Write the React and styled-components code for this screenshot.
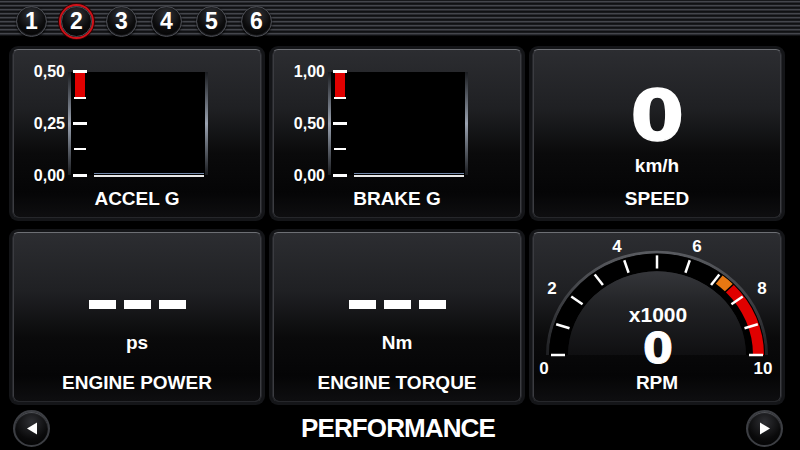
import React from "react";
import styled, { createGlobalStyle } from "styled-components";

const GlobalStyle = createGlobalStyle`
  html, body {
    margin: 0;
    padding: 0;
    background: #000;
  }
  body {
    font-family: "Liberation Sans", Arial, sans-serif;
    color: #fff;
  }
`;

const Screen = styled.div`
  width: 800px;
  height: 450px;
  overflow: hidden;
  display: flex;
  flex-direction: column;
  background: #000;
`;

const TopBar = styled.div`
  height: 40px;
  box-sizing: border-box;
  padding: 2px 0 0 16px;
  display: flex;
  align-items: center;
  gap: 14px;
  background:
    repeating-linear-gradient(
        to bottom,
        #18191c 0px,
        #18191c 1px,
        #44464c 1px,
        #44464c 2px,
        #2a2b30 2px,
        #2a2b30 3px,
        #101113 3px,
        #101113 4px
      )
      top / 100% 36px no-repeat,
    linear-gradient(to bottom, #0c0c0e, #000);
`;

const Tab = styled.div`
  width: 31px;
  height: 31px;
  box-sizing: border-box;
  border-radius: 50%;
  border: 1px solid #4a4c52;
  background: radial-gradient(circle at 50% 28%, #34363b 0%, #0c0c0d 55%, #000 100%);
  box-shadow: ${(p) =>
    p.$active ? "0 0 0 2px #d0121a, 0 0 0 3px #300" : "0 1px 2px #000, inset 0 -1px 1px #2a2b2f"};
  display: flex;
  align-items: center;
  justify-content: center;
  font-size: 23px;
  font-weight: bold;
  line-height: 1;
  color: #fff;
`;

const Grid = styled.div`
  display: grid;
  grid-template-columns: repeat(3, 250px);
  grid-template-rows: 169px 170px;
  column-gap: 10px;
  row-gap: 14px;
  padding: 9px 0 0 12px;
`;

const Card = styled.div`
  position: relative;
  box-sizing: border-box;
  border-radius: 6px;
  border: 1px solid #26272b;
  border-top-color: #6d6f74;
  background: linear-gradient(
    to bottom,
    #2c2d31 0%,
    #1f2023 35%,
    #0a0a0b 62%,
    #050506 85%,
    #0e0e10 100%
  );
  box-shadow: 0 0 0 3px #141518, 0 0 0 4px #000, inset 1px 0 0 #3b3c41,
    inset -1px 0 0 #3b3c41;
  display: flex;
  flex-direction: column;
  align-items: center;
  padding-top: ${(p) => p.$top || 0}px;
`;

const Title = styled.div`
  margin-top: auto;
  margin-bottom: 7px;
  font-size: 19px;
  line-height: 22px;
  font-weight: bold;
  color: #fff;
  position: relative;
`;

const BigNumber = styled.div`
  font-family: "DejaVu Sans", sans-serif;
  font-weight: bold;
  font-size: 70px;
  line-height: 70px;
  -webkit-text-stroke: 1.5px #fff;
  transform: scaleX(1.1);
`;

const Unit = styled.div`
  margin-top: ${(p) => p.$gap || 0}px;
  font-size: 19px;
  line-height: 22px;
  font-weight: bold;
`;

const Dashes = styled.div`
  display: flex;
  gap: 8px;
`;

const Dash = styled.span`
  width: 27px;
  height: 9px;
  background: #fff;
`;

const ChartSvg = styled.svg`
  display: block;
  flex: none;
`;

const GaugeSvg = styled.svg`
  position: absolute;
  left: 0;
  top: 0;
`;

const Footer = styled.div`
  flex: 1;
  display: flex;
  align-items: center;
  justify-content: space-between;
  padding: 4px 17px 0 13px;
`;

const ArrowButton = styled.div`
  width: 37px;
  height: 37px;
  box-sizing: border-box;
  border-radius: 50%;
  border: 2px solid #3c3e43;
  background: radial-gradient(circle at 50% 30%, #2e2f33 0%, #0a0a0b 60%, #000 100%);
  box-shadow: inset 0 1px 1px #55575c;
  display: flex;
  align-items: center;
  justify-content: center;
`;

const PageTitle = styled.div`
  font-size: 26px;
  font-weight: bold;
  letter-spacing: -0.9px;
  color: #fff;
`;

function BarChart({ labels }) {
  return (
    <ChartSvg width="248" height="138">
      <defs>
        <linearGradient id="rim" x1="0" y1="0" x2="0" y2="1">
          <stop offset="0" stopColor="#1a1c20" />
          <stop offset="0.5" stopColor="#9aa2b0" />
          <stop offset="1" stopColor="#1a1c20" />
        </linearGradient>
      </defs>
      <rect x="55" y="22" width="140" height="103" fill="#000" />
      <rect x="55" y="22" width="3" height="103" fill="url(#rim)" />
      <rect x="192" y="22" width="3" height="103" fill="url(#rim)" />
      <rect x="81" y="123" width="110" height="1" fill="#7186a8" />
      <rect x="81" y="125" width="110" height="2" fill="#e8e8e8" />
      <rect x="62" y="22" width="10" height="25" fill="#e00000" />
      <rect x="61" y="47" width="12" height="2" fill="#fff" />
      <rect x="60" y="20" width="14" height="3" fill="#fff" />
      <rect x="60" y="72" width="14" height="3" fill="#fff" />
      <rect x="61" y="98" width="12" height="2" fill="#fff" />
      <rect x="60" y="124" width="14" height="3" fill="#fff" />
      <g fill="#fff" fontSize="16" fontWeight="bold" textAnchor="end">
        <text x="52" y="27">{labels[0]}</text>
        <text x="52" y="79">{labels[1]}</text>
        <text x="52" y="131">{labels[2]}</text>
      </g>
    </ChartSvg>
  );
}

function Gauge() {
  const cx = 124;
  const cy = 122;
  const k = 0.94;
  const polar = (r, deg) => [
    cx + r * Math.cos((deg * Math.PI) / 180),
    cy - r * k * Math.sin((deg * Math.PI) / 180),
  ];
  const band = (r1, r2, a1, a2) => {
    const [x1, y1] = polar(r2, a1);
    const [x2, y2] = polar(r2, a2);
    const [x3, y3] = polar(r1, a2);
    const [x4, y4] = polar(r1, a1);
    return `M${x1} ${y1} A${r2} ${r2 * k} 0 0 1 ${x2} ${y2} L${x3} ${y3} A${r1} ${r1 * k} 0 0 0 ${x4} ${y4} Z`;
  };
  const ang = (v) => 180 - 18 * v;
  const ticks = Array.from({ length: 11 }, (_, i) => {
    const [x1, y1] = polar(92, ang(i));
    const [x2, y2] = polar(106, ang(i));
    return <line key={i} x1={x1} y1={y1} x2={x2} y2={y2} stroke="#fff" strokeWidth="2.5" />;
  });
  const labels = [
    ["0", 11, 141],
    ["2", 19, 61],
    ["4", 84, 19],
    ["6", 164, 19],
    ["8", 229, 61],
    ["10", 230, 141],
  ];

  return (
    <GaugeSvg width="248" height="168">
      <defs>
        <linearGradient id="gaugeRim" x1="0" y1="0" x2="0" y2="1">
          <stop offset="0" stopColor="#5a5c61" />
          <stop offset="1" stopColor="#1e1f22" />
        </linearGradient>
        <linearGradient id="dome" x1="0" y1="0" x2="0" y2="1">
          <stop offset="0" stopColor="#35363a" />
          <stop offset="0.4" stopColor="#222326" />
          <stop offset="1" stopColor="#0f0f11" />
        </linearGradient>
      </defs>
      <path d={band(108, 111, 180, 0)} fill="url(#gaugeRim)" />
      <path d={band(89, 108, 180, 0)} fill="#000" />
      <path
        d={`M${cx - 89} ${cy} A89 ${89 * k} 0 0 1 ${cx + 89} ${cy} Z`}
        fill="url(#dome)"
      />
      <path d={band(96, 107, ang(7.55), 0)} fill="#e00000" />
      <path d={band(96, 107, ang(7.1), ang(7.5))} fill="#e87812" />
      {ticks}
      <g fill="#fff" fontSize="17" fontWeight="bold" textAnchor="middle">
        {labels.map(([t, x, y]) => (
          <text key={t} x={x} y={y}>
            {t}
          </text>
        ))}
        <text x="125" y="89" fontSize="21">
          x1000
        </text>
        <text
          x="125"
          y="130"
          fontSize="43"
          fontFamily="DejaVu Sans, sans-serif"
          stroke="#fff"
          strokeWidth="1"
        >
          0
        </text>
      </g>
    </GaugeSvg>
  );
}

function Triangle({ dir }) {
  return (
    <svg width="12" height="13" viewBox="0 0 12 13">
      <path d={dir === "left" ? "M1 6.5 L11 0.5 L11 12.5 Z" : "M11 6.5 L1 0.5 L1 12.5 Z"} fill="#fff" />
    </svg>
  );
}

export default function App() {
  return (
    <>
      <GlobalStyle />
      <Screen>
        <TopBar>
          {[1, 2, 3, 4, 5, 6].map((n) => (
            <Tab key={n} $active={n === 2}>
              {n}
            </Tab>
          ))}
        </TopBar>
        <Grid>
          <Card>
            <BarChart labels={["0,50", "0,25", "0,00"]} />
            <Title>ACCEL G</Title>
          </Card>
          <Card>
            <BarChart labels={["1,00", "0,50", "0,00"]} />
            <Title>BRAKE G</Title>
          </Card>
          <Card $top={31}>
            <BigNumber>0</BigNumber>
            <Unit $gap={4}>km/h</Unit>
            <Title>SPEED</Title>
          </Card>
          <Card $top={67}>
            <Dashes>
              <Dash />
              <Dash />
              <Dash />
            </Dashes>
            <Unit $gap={23}>ps</Unit>
            <Title>ENGINE POWER</Title>
          </Card>
          <Card $top={67}>
            <Dashes>
              <Dash />
              <Dash />
              <Dash />
            </Dashes>
            <Unit $gap={23}>Nm</Unit>
            <Title>ENGINE TORQUE</Title>
          </Card>
          <Card>
            <Gauge />
            <Title>RPM</Title>
          </Card>
        </Grid>
        <Footer>
          <ArrowButton>
            <Triangle dir="left" />
          </ArrowButton>
          <PageTitle>PERFORMANCE</PageTitle>
          <ArrowButton>
            <Triangle dir="right" />
          </ArrowButton>
        </Footer>
      </Screen>
    </>
  );
}
